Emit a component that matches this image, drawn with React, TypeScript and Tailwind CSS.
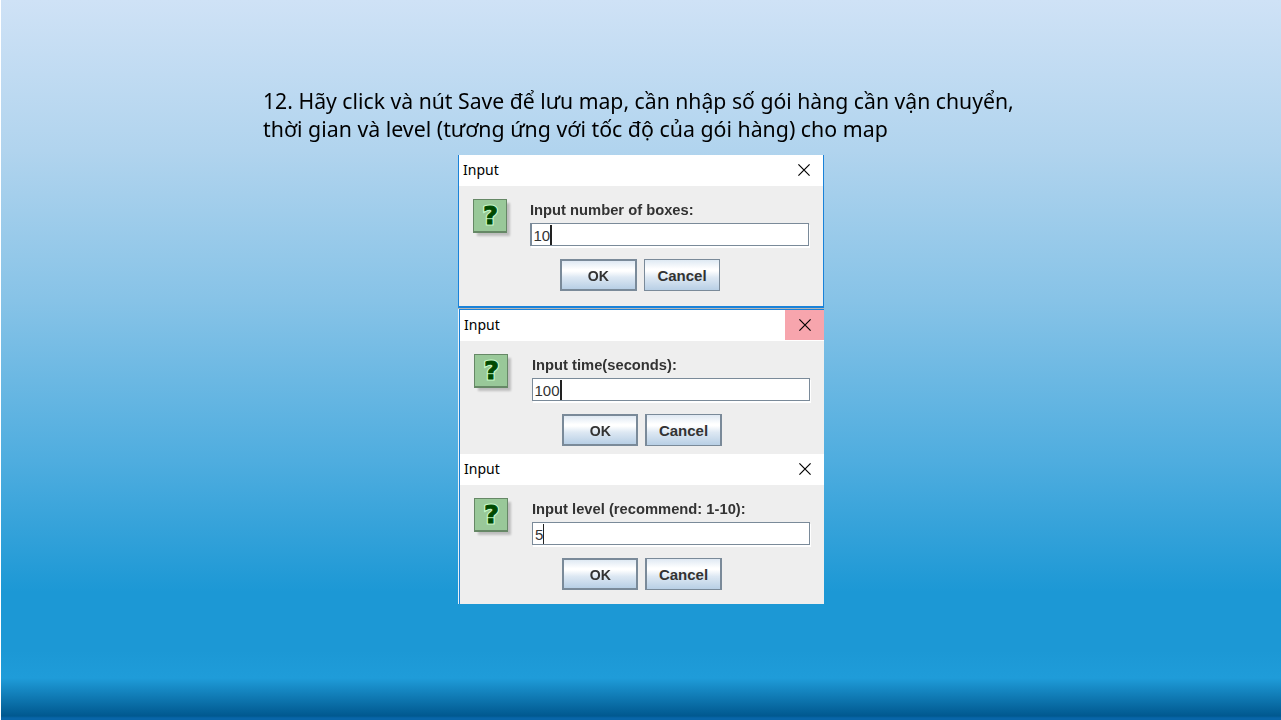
import React from "react";

type DialogProps = {
  label: string;
  value: string;
  frame: string;
  close: string;
  fieldPad: string;
  field: string;
  caret: string;
  buttons: string;
  ok: string;
  cancel: string;
};

function QuestionIcon() {
  return (
    <svg width="40" height="42" viewBox="0 0 40 42" className="block shrink-0">
      <defs>
        <filter id="soft" x="-20%" y="-20%" width="140%" height="140%">
          <feGaussianBlur stdDeviation="1.2" />
        </filter>
      </defs>
      <rect x="4" y="4" width="33" height="33" fill="#000" opacity="0.2" filter="url(#soft)" />
      <rect width="34" height="34" fill="#668866" />
      <rect x="1" y="1" width="32" height="31" fill="#99c899" />
      <g transform="translate(17.4 25.4) scale(1.06 1)">
        <text
          x="0"
          y="0"
          textAnchor="middle"
          fontFamily="DejaVu Sans"
          fontWeight="700"
          fontSize="24.5"
          fill="none"
          stroke="#c8fac8"
          strokeWidth="3"
        >
          ?
        </text>
        <text
          x="0"
          y="0"
          textAnchor="middle"
          fontFamily="DejaVu Sans"
          fontWeight="700"
          fontSize="24.5"
          fill="#004a00"
          stroke="#004a00"
          strokeWidth="0.8"
        >
          ?
        </text>
      </g>
    </svg>
  );
}

function CloseIcon() {
  return (
    <svg width="12" height="12" viewBox="0 0 12 12" className="block">
      <path d="M0.4 0.4 11.6 11.6M11.6 0.4 0.4 11.6" stroke="#000" strokeWidth="1.2" fill="none" />
    </svg>
  );
}

const buttonBase =
  "flex h-8 items-center justify-center border-[#7a8a99] bg-[linear-gradient(180deg,#dfe9f3_0%,#ffffff_30%,#ffffff_36%,#dde8f3_58%,#b8cfe5_100%)] font-['Liberation_Sans',sans-serif] text-[15px] font-bold leading-none text-[#333333]";

function InputDialog(p: DialogProps) {
  return (
    <section className={`flex flex-col bg-[#eeeeee] ${p.frame}`}>
      <header className="flex h-[31px] shrink-0 items-start justify-between bg-white">
        <span className="flex h-[29px] items-center pl-[4px] font-['Noto_Sans',sans-serif] text-[14px] text-black">
          Input
        </span>
        <span className={`flex h-[30px] w-[39px] items-center justify-center ${p.close}`}>
          <CloseIcon />
        </span>
      </header>
      <div className="flex h-[73px] shrink-0">
        <div className="w-[71px] shrink-0 pl-[14px] pt-[13px]">
          <QuestionIcon />
        </div>
        <div className={`pt-[14px] ${p.fieldPad}`}>
          <div className="h-[23px] w-max origin-left scale-x-[0.982] whitespace-nowrap font-['Liberation_Sans',sans-serif] text-[15px] font-bold leading-[19px] text-[#333333]">
            {p.label}
          </div>
          <div className={`flex h-[23px] items-start border-y border-r border-[#7a8a99] bg-white shadow-[1px_2px_0_#ffffff] ${p.field}`}>
            <span className="font-['Liberation_Sans',sans-serif] text-[15px] leading-[24px] text-[#333333]">{p.value}</span>
            <span className={`mt-px h-5 bg-[#222222] ${p.caret}`} />
          </div>
        </div>
      </div>
      <div className={`flex gap-[7px] ${p.buttons}`}>
        <button className={`${buttonBase} border-2 ${p.ok}`}>
          <span className="scale-x-[0.94]">OK</span>
        </button>
        <button className={`${buttonBase} ${p.cancel}`}>Cancel</button>
      </div>
    </section>
  );
}

export default function App() {
  return (
    <main className="h-[720px] w-[1281px] overflow-hidden border-l border-white bg-[linear-gradient(180deg,#cfe2f6_0px,#b1d4ee_150px,#87c3e7_300px,#4faddf_460px,#1c98d5_592px,#1c98d5_650px,#1f9cd9_678px,#00588f_716px,#0865a8_718px,#0865a8_720px)]">
      <h1 className="ml-[262px] whitespace-nowrap pt-[87px] font-['Noto_Sans',sans-serif] text-[22.5px] font-normal leading-[28px] text-black">
        <span className="block w-max origin-left scale-x-[0.942]">
          12. Hãy click và nút Save để lưu map, cần nhập số gói hàng cần vận chuyển,
        </span>
        <span className="block w-max origin-left scale-x-[0.948]">
          thời gian và level (tương ứng với tốc độ của gói hàng) cho map
        </span>
      </h1>
      <div className="ml-[457px] mt-[12px] flex w-[366px] flex-col">
        <InputDialog
          label="Input number of boxes:"
          value="10"
          frame="h-[153px] border-x border-b-2 border-[#1a82d8]"
          close=""
          fieldPad=""
          field="w-[279px] border-l-2 pl-[1.5px]"
          caret="w-[2px]"
          buttons="pl-[101px]"
          ok="w-[77px]"
          cancel="w-[76px] border"
        />
        <div className="h-px bg-[#b5b5b5]" />
        <div className="flex flex-col border-l border-[#e8f1f8]">
          <InputDialog
            label="Input time(seconds):"
            value="100"
            frame="h-[145px] border-l border-t border-[#1a82d8]"
            close="bg-[#f7a5ad]"
            fieldPad="pl-px"
            field="w-[278px] border-l pl-[1.5px]"
            caret="w-[2px]"
            buttons="pl-[102px]"
            ok="w-[76px]"
            cancel="w-[77px] border-x-2 border-y"
          />
          <InputDialog
            label="Input level (recommend: 1-10):"
            value="5"
            frame="h-[150px] border-l border-[#1a82d8]"
            close=""
            fieldPad="pl-px"
            field="w-[278px] border-l pl-[2px]"
            caret="w-px"
            buttons="pl-[102px]"
            ok="w-[76px]"
            cancel="w-[77px] border-x-2 border-y"
          />
        </div>
      </div>
    </main>
  );
}
